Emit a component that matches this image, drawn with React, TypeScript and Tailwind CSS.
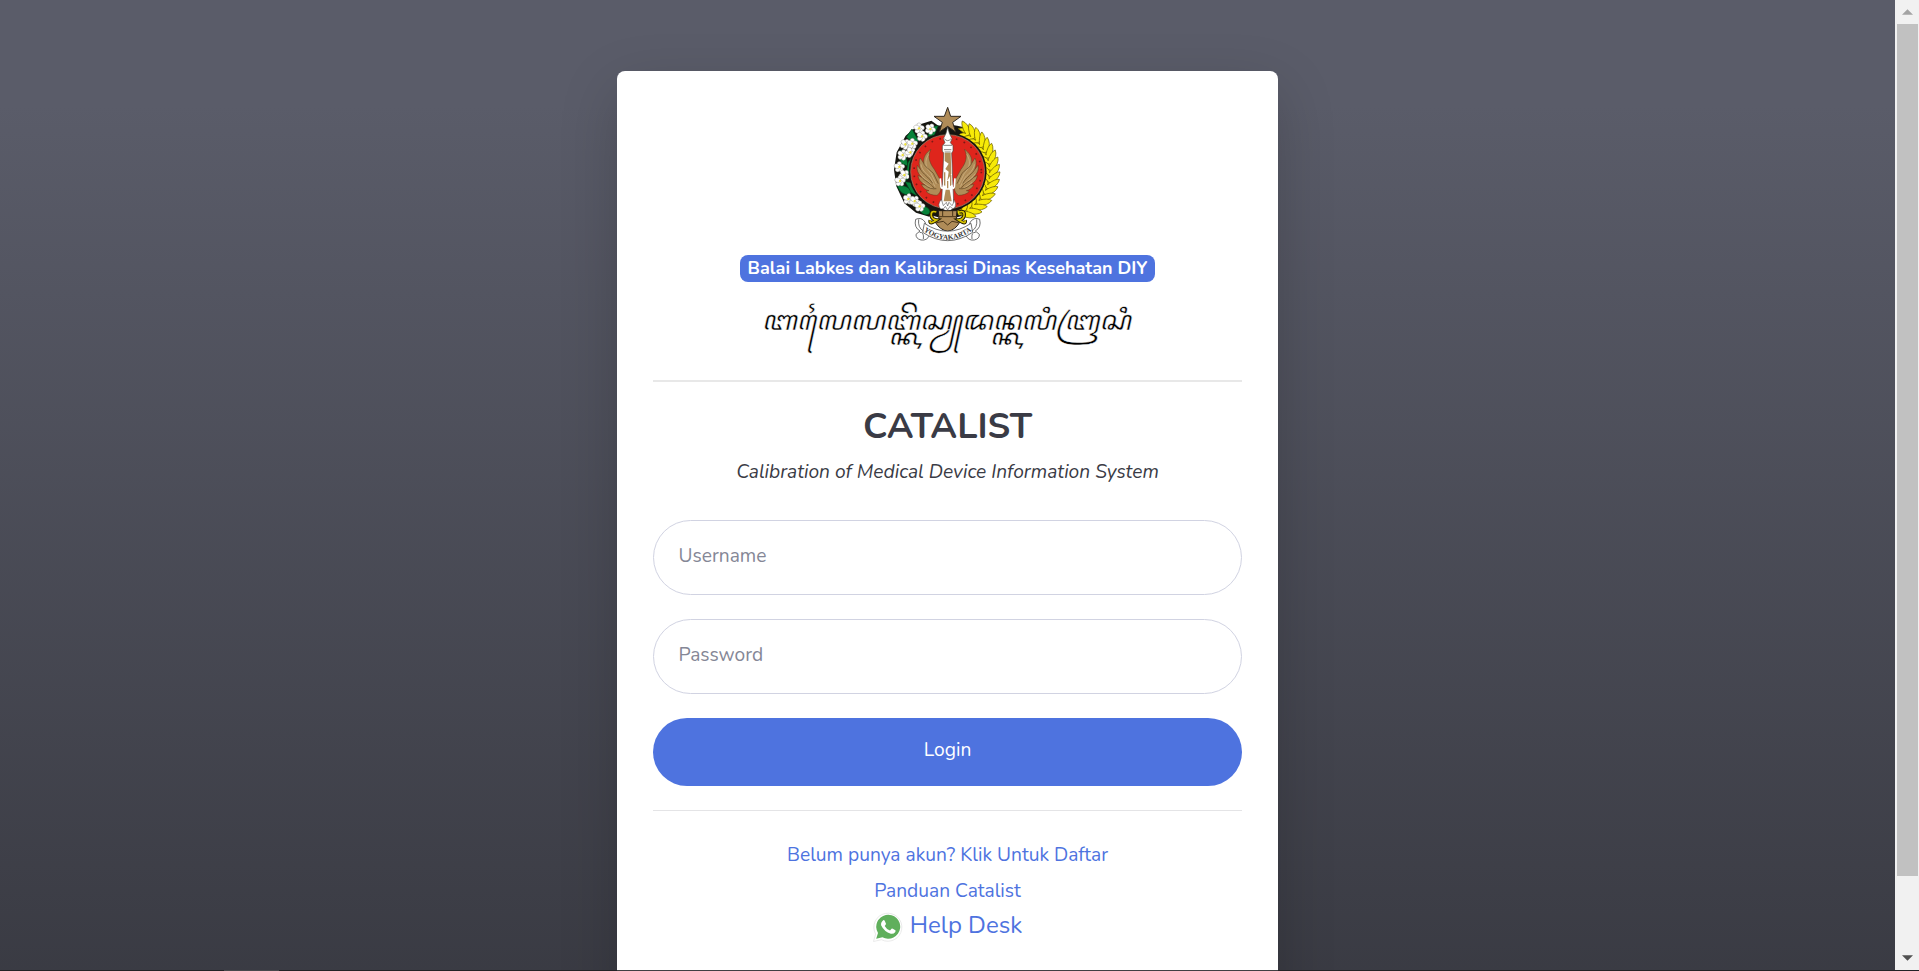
import type { ReactNode } from "react";

const leaves = Array.from({ length: 17 }, (_, i) => i);

function Flower({ x, y, r = 0 }: { x: number; y: number; r?: number }) {
  return (
    <g transform={`translate(${x} ${y}) rotate(${r})`} stroke="#77776c" strokeWidth="1">
      {[0, 80, 150, 215, 290].map((a) => (
        <ellipse key={a} cx="0" cy="-7.5" rx="7" ry="9" fill="#fff" transform={`rotate(${a})`} />
      ))}
      <circle r="3.5" fill="#efe23a" stroke="none" />
    </g>
  );
}

function Wing() {
  return (
    <g stroke="#5b4320" strokeWidth="1.6" fill="#b08c58">
      <path d="M153 163C143 181 146 201 163 223L181 255C187 272 184 293 171 301C157 301 145 297 138 289L147 287C136 285 128 278 124 268L135 270C122 262 115 253 114 241L125 247C114 236 109 224 112 211L122 224C116 210 116 199 121 189L131 205C129 187 138 173 153 163Z" />
      <g fill="none" stroke="#dcc598" strokeWidth="1.6">
        <path d="M146 178C133 198 135 216 153 235L169 267" />
        <path d="M123 208C124 223 138 236 151 247L165 275" />
        <path d="M120 236C128 248 141 254 154 268" />
        <path d="M130 262C137 270 146 273 157 281" />
      </g>
      <g fill="none" stroke="#5b4320" strokeWidth="2">
        <path d="M131 205C134 215 147 222 160 235L175 266" />
        <path d="M122 224C129 237 145 245 158 265" />
        <path d="M125 247C134 258 150 262 162 279" />
        <path d="M135 270C145 279 156 283 169 281" />
      </g>
    </g>
  );
}

function Emblem() {
  return (
    <svg viewBox="0 0 420 465" className="ml-[5px] block h-[155px] w-[140px] shrink-0">
      <defs>
        <path id="ribbon-line" d="M126 404Q203 464 280 404" />
      </defs>
      <ellipse cx="203" cy="229" rx="145" ry="140" fill="#151510" />
      <path d="M116 89L154 77L190 103L163 130L103 180L82 252L109 310L155 351L148 365L108 353L73 325L49 274L42 224L50 172L77 122Z" fill="#151510" />
      <g fill="#07823a" stroke="#033b18" strokeWidth="2">
        <path d="M79 126L96 102L115 136L105 152Z" />
        <path d="M62 164Q54 181 63 205L83 213Q83 184 62 164Z" />
        <path d="M51 272Q64 303 88 299L96 287Q78 268 51 272Z" />
        <path d="M100 178L83 204L76 259L91 242L109 185Z" />
        <path d="M113 337Q130 370 151 355Q151 340 134 334Z" />
        <path d="M151 95L175 92L163 121L143 125Z" />
        <path d="M75 260L99 263L113 304L94 293Z" />
      </g>
      <Flower x={117} y={100} />
      <Flower x={151} y={102} r={25} />
      <Flower x={126} y={124} r={12} />
      <Flower x={76} y={148} r={30} />
      <Flower x={97} y={146} />
      <Flower x={68} y={180} r={15} />
      <Flower x={91} y={172} r={50} />
      <Flower x={58} y={216} />
      <Flower x={73} y={240} r={40} />
      <Flower x={60} y={258} />
      <Flower x={85} y={312} r={8} />
      <Flower x={104} y={318} r={30} />
      <Flower x={119} y={334} />
      <path d="M235 101C278 91 315 128 334 175C352 220 345 277 316 316C294 344 266 361 236 360L231 348C272 333 300 306 311 267C324 216 309 165 279 134C265 119 249 113 235 101Z" fill="#f4e900" stroke="#8a7b00" strokeWidth="2" />
      <g stroke="#6b5e00" strokeWidth="2" fill="#f7ea08">
        {leaves.map((i) => (
          <g key={i} transform={`rotate(${-64 + i * 8.1} 200 231)`}>
            <path d="M328 231Q345 207 358 206Q360 224 338 245Q314 239 306 214Q326 214 330 231Z" />
          </g>
        ))}
      </g>
      <circle cx="203" cy="230" r="117" fill="#17130f" />
      <circle cx="203" cy="230" r="111" fill="#df251c" stroke="#a89070" strokeWidth="2" />
      <circle cx="203" cy="230" r="101" fill="none" stroke="#7c1a16" strokeWidth="5" strokeDasharray="5 20" />
      <Wing />
      <g transform="matrix(-1 0 0 1 406 0)"><Wing /></g>
      <path d="M203 37L212 64H243L218 82L227 111L203 94L178 111L187 82L162 64H193Z" fill="#b08c58" stroke="#30281e" strokeWidth="3" />
      <path d="M203 96L208 115L216 131L211 143L219 152V168L215 174L218 250L221 319L226 336L203 352L180 336L185 319L188 250L191 174L187 168V152L195 143L190 131L198 115Z" fill="#fff" stroke="#4a4944" strokeWidth="2" />
      <path d="M190 151H216M192 164H214M194 171H212M193 131Q203 143 213 131" fill="none" stroke="#4a4944" strokeWidth="2" />
      <path d="M194 173H212L214 236L202 257L206 230L196 222L206 206L194 198Z" fill="#b08c58" />
      <path d="M194 232V272M212 240V272M203 258V280" fill="none" stroke="#b08c58" strokeWidth="4" />
      <path d="M181 250L183 276Q188 286 191 270M225 250L223 276Q218 286 215 270" fill="none" stroke="#fff" strokeWidth="5" />
      <path d="M197 284L191 319H215L209 284Z" fill="#b08c58" />
      <path d="M184 313Q170 330 182 342Q193 344 196 334L203 345L210 334Q218 345 225 337Q231 327 221 313Q222 326 216 332L207 322L203 333L199 322L190 332Z" fill="#fff" stroke="#333" strokeWidth="1.5" />
      <path d="M175 347H231L229 370L239 382Q226 405 203 409Q180 405 166 382L177 370Z" fill="#b08c58" stroke="#211b15" strokeWidth="3" />
      <path d="M174 365H231M169 383L190 379L203 390L216 379L236 383M188 348V363M218 348V363" fill="none" stroke="#493518" strokeWidth="3" />
      <g fill="none" stroke="#251f02" strokeWidth="11">
        <path d="M169 351Q151 345 154 363Q157 374 170 375Q147 390 151 376" />
        <path d="M237 351Q255 345 252 363Q249 374 236 375Q259 390 255 376" />
      </g>
      <g fill="none" stroke="#d9c400" strokeWidth="5">
        <path d="M169 351Q151 345 154 363Q157 374 170 375Q147 390 151 376" />
        <path d="M237 351Q255 345 252 363Q249 374 236 375Q259 390 255 376" />
      </g>
      <g fill="#fff" stroke="#565656" strokeWidth="2.5">
        <path d="M107 373Q124 365 135 381L149 420Q141 438 123 435Q107 431 108 418L120 408Q101 397 107 373Z" />
        <path d="M299 373Q282 365 271 381L257 420Q265 438 283 435Q299 431 298 418L286 408Q305 397 299 373Z" />
        <path d="M133 385Q203 432 273 385L278 412Q203 462 128 412Z" />
        <path d="M116 373Q113 398 130 408M119 412Q133 411 130 432M290 373Q293 398 276 408M287 412Q273 411 276 432" fill="none" />
      </g>
      <text fill="#3a3a3a" fontSize="22" fontWeight="700" fontFamily="Liberation Serif, serif" textAnchor="middle">
        <textPath href="#ribbon-line" startOffset="50%">YOGYAKARTA</textPath>
      </text>
    </svg>
  );
}

function WhatsApp() {
  return (
    <svg viewBox="0 0 30 30" className="h-[30px] w-[30px] shrink-0">
      <path d="M.5 29.5L2.6 22A14 14 0 1 1 8.5 27.7Z" fill="#fff" stroke="#e4e4e4" strokeWidth=".8" />
      <path d="M3.2 26.8L5 21A12 12 0 1 1 9.4 25.2Z" fill="#60af5c" />
      <path d="M10.2 8.3Q11 7.7 11.7 8.7L13 11.8Q13.2 12.3 11.7 13.9Q13.5 17.2 17 18.5L18.5 16.8Q19 16.3 19.8 16.8L22.4 18.2Q23 18.6 22.1 20.2Q20.4 22.3 17.8 21.7Q11.2 19.8 8.2 13.6Q7.4 10.5 10.2 8.3Z" fill="#fff" />
    </svg>
  );
}

function Field({ label, type }: { label: string; type: string }) {
  return (
    <input
      type={type}
      placeholder={label}
      aria-label={label}
      className="block h-[75px] w-full rounded-full border border-[#d1d3e2] bg-white px-[24.5px] pb-[3px] text-[19.2px] text-[#6e707e] outline-none placeholder:text-[#858796]"
    />
  );
}

function TextLink({ children }: { children: ReactNode }) {
  return <a href="#" className="flex h-9 items-center">{children}</a>;
}

function ScrollBar() {
  return (
    <div className="flex h-[970px] w-6 shrink-0 flex-col items-center bg-[#f1f1f1]">
      <div className="flex h-6 items-center justify-center">
        <svg viewBox="0 0 12 6" className="h-[6px] w-[11px]"><path d="M0 6L6 0L12 6Z" fill="#a3a3a3" /></svg>
      </div>
      <div className="h-[852px] w-[21px] bg-[#c1c1c1]" />
      <div className="mt-auto flex h-6 items-center justify-center">
        <svg viewBox="0 0 12 6" className="h-[6px] w-[11px]"><path d="M0 0H12L6 6Z" fill="#505050" /></svg>
      </div>
    </div>
  );
}

export default function App() {
  return (
    <div className="flex h-[971px] w-[1919px] flex-col overflow-hidden bg-[#222226] font-['Nunito','Lato',sans-serif]">
      <div className="flex h-[970px]">
        <main className="flex h-[970px] min-w-0 flex-1 justify-center overflow-hidden bg-[linear-gradient(180deg,#5a5c69_105px,#373840_1050px)] pt-[71px]">
          <section className="flex h-[950px] w-[661px] shrink-0 flex-col items-center rounded-[8px] bg-white px-9 pt-6 shadow-[0_19px_58px_rgba(0,0,0,0.175)]">
            <Emblem />
            <div className="mt-[5px] flex h-[27px] w-[415px] items-center justify-center rounded-[8px] bg-[#4e73df] text-[18px] font-bold whitespace-nowrap text-white">
              Balai Labkes dan Kalibrasi Dinas Kesehatan DIY
            </div>
            <div className="mt-[13px] flex h-[62px] items-center justify-center pt-1 font-['Noto_Sans_Javanese','Noto_Sans',sans-serif] text-[28px] whitespace-nowrap text-black [-webkit-text-stroke:0.5px_white] [transform:scaleX(1.03)_skewX(-12deg)]" lang="jv">
              ꦧꦭꦻꦭꦧ꧀ꦏꦼꦱꦾꦢꦤ꧀ꦏꦭꦶꦧꦿꦱꦶ
            </div>
            <hr className="mt-[23px] h-[2px] w-full border-0 bg-[#e8e8e8]" />
            <h1 className="mt-6 flex h-[42px] items-center text-[36px] font-bold text-[#3a3b45]">CATALIST</h1>
            <p className="mt-[7px] flex h-[34px] items-center text-[19.2px] whitespace-nowrap text-[#3a3b45] italic">Calibration of Medical Device Information System</p>
            <form className="mt-[31px] flex w-full flex-col gap-6">
              <Field label="Username" type="text" />
              <Field label="Password" type="password" />
              <button type="button" className="h-[68px] w-full rounded-full bg-[#4e73df] pb-[3px] text-[19.2px] text-white">Login</button>
            </form>
            <hr className="mt-6 h-px w-full border-0 bg-[#e4e4e6]" />
            <nav className="mt-[26px] flex flex-col items-center text-[19.2px] text-[#4e73df]">
              <TextLink>Belum punya akun? Klik Untuk Daftar</TextLink>
              <TextLink>Panduan Catalist</TextLink>
              <a href="#" className="mt-[3px] flex h-[30px] items-center gap-[7px] text-[24px]">
                <WhatsApp />
                <span className="pb-1">Help Desk</span>
              </a>
            </nav>
          </section>
        </main>
        <ScrollBar />
      </div>
      <div className="flex h-px w-full bg-[#222226]">
        <div className="ml-[224px] h-px w-[55px] bg-[#48484c]" />
        <div className="ml-[338px] h-px w-[661px] bg-[#404043]" />
      </div>
    </div>
  );
}
